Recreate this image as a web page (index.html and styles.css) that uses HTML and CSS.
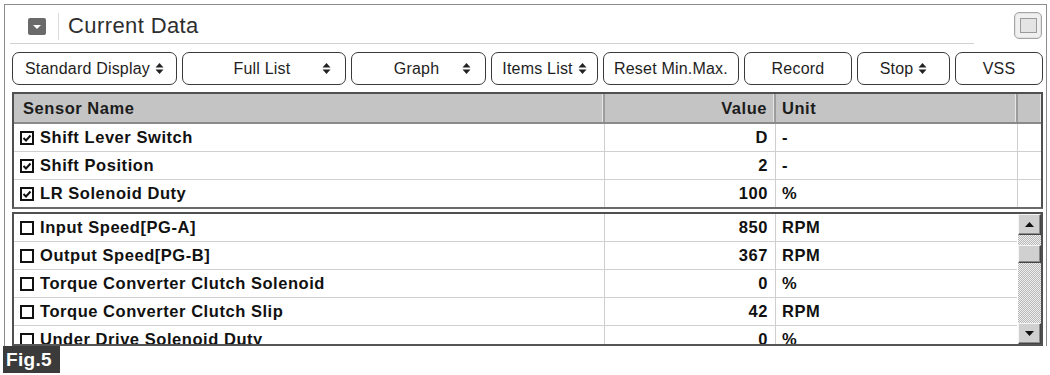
FILE: index.html
```html
<!DOCTYPE html>
<html>
<head>
<meta charset="utf-8">
<link rel="stylesheet" href="styles.css">
</head>
<body>
<div class="frame">
  <div class="titlebar">
    <div class="title-area">
      <span class="collapse-icon">
        <svg width="18" height="17" viewBox="0 0 18 17"><rect x="0" y="0" width="18" height="17" rx="2" fill="#6a6a6a"/><polygon points="5,7 13,7 9,11" fill="#fff"/></svg>
      </span>
      <span class="title-sep"></span>
      <span class="title-text">Current Data</span>
    </div>
    <div class="max-btn"><span class="max-inner"></span></div>
  </div>

  <div class="toolbar">
    <div class="tbtn sel w165"><span class="lbl">Standard Display</span><svg class="arr" width="9" height="13" viewBox="0 0 9 13"><polygon points="0.5,5.5 8.5,5.5 4.5,1" fill="#222"/><polygon points="0.5,7.5 8.5,7.5 4.5,12" fill="#222"/></svg></div>
    <div class="tbtn sel spread w164"><span class="lbl">Full List</span><svg class="arr" width="9" height="13" viewBox="0 0 9 13"><polygon points="0.5,5.5 8.5,5.5 4.5,1" fill="#222"/><polygon points="0.5,7.5 8.5,7.5 4.5,12" fill="#222"/></svg></div>
    <div class="tbtn sel spread w135"><span class="lbl">Graph</span><svg class="arr" width="9" height="13" viewBox="0 0 9 13"><polygon points="0.5,5.5 8.5,5.5 4.5,1" fill="#222"/><polygon points="0.5,7.5 8.5,7.5 4.5,12" fill="#222"/></svg></div>
    <div class="tbtn sel w107"><span class="lbl">Items List</span><svg class="arr" width="9" height="13" viewBox="0 0 9 13"><polygon points="0.5,5.5 8.5,5.5 4.5,1" fill="#222"/><polygon points="0.5,7.5 8.5,7.5 4.5,12" fill="#222"/></svg></div>
    <div class="tbtn w136"><span class="lbl">Reset Min.Max.</span></div>
    <div class="tbtn w108"><span class="lbl">Record</span></div>
    <div class="tbtn sel w93"><span class="lbl">Stop</span><svg class="arr" width="9" height="13" viewBox="0 0 9 13"><polygon points="0.5,5.5 8.5,5.5 4.5,1" fill="#222"/><polygon points="0.5,7.5 8.5,7.5 4.5,12" fill="#222"/></svg></div>
    <div class="tbtn w88"><span class="lbl">VSS</span></div>
  </div>

  <div class="grid-wrap">
    <div class="top-box">
      <div class="row head">
        <div class="c c-name">Sensor Name</div>
        <div class="c c-val">Value</div>
        <div class="c c-unit">Unit</div>
        <div class="c c-x"></div>
      </div>
      <div class="row">
        <div class="c c-name"><svg class="cb" width="14" height="14" viewBox="0 0 14 14"><rect x="1" y="1" width="12" height="12" fill="#fff" stroke="#111" stroke-width="2"/><polyline points="3.5,7 6,9.5 10.5,4.5" fill="none" stroke="#111" stroke-width="2"/></svg>Shift Lever Switch</div>
        <div class="c c-val">D</div>
        <div class="c c-unit">-</div>
        <div class="c c-x"></div>
      </div>
      <div class="row">
        <div class="c c-name"><svg class="cb" width="14" height="14" viewBox="0 0 14 14"><rect x="1" y="1" width="12" height="12" fill="#fff" stroke="#111" stroke-width="2"/><polyline points="3.5,7 6,9.5 10.5,4.5" fill="none" stroke="#111" stroke-width="2"/></svg>Shift Position</div>
        <div class="c c-val">2</div>
        <div class="c c-unit">-</div>
        <div class="c c-x"></div>
      </div>
      <div class="row">
        <div class="c c-name"><svg class="cb" width="14" height="14" viewBox="0 0 14 14"><rect x="1" y="1" width="12" height="12" fill="#fff" stroke="#111" stroke-width="2"/><polyline points="3.5,7 6,9.5 10.5,4.5" fill="none" stroke="#111" stroke-width="2"/></svg>LR Solenoid Duty</div>
        <div class="c c-val">100</div>
        <div class="c c-unit">%</div>
        <div class="c c-x"></div>
      </div>
    </div>

    <div class="bottom-box">
      <div class="rows">
        <div class="row">
          <div class="c c-name"><svg class="cb" width="14" height="14" viewBox="0 0 14 14"><rect x="1" y="1" width="12" height="12" fill="#fff" stroke="#111" stroke-width="2"/></svg>Input Speed[PG-A]</div>
          <div class="c c-val">850</div>
          <div class="c c-unit">RPM</div>
        </div>
        <div class="row">
          <div class="c c-name"><svg class="cb" width="14" height="14" viewBox="0 0 14 14"><rect x="1" y="1" width="12" height="12" fill="#fff" stroke="#111" stroke-width="2"/></svg>Output Speed[PG-B]</div>
          <div class="c c-val">367</div>
          <div class="c c-unit">RPM</div>
        </div>
        <div class="row">
          <div class="c c-name"><svg class="cb" width="14" height="14" viewBox="0 0 14 14"><rect x="1" y="1" width="12" height="12" fill="#fff" stroke="#111" stroke-width="2"/></svg>Torque Converter Clutch Solenoid</div>
          <div class="c c-val">0</div>
          <div class="c c-unit">%</div>
        </div>
        <div class="row">
          <div class="c c-name"><svg class="cb" width="14" height="14" viewBox="0 0 14 14"><rect x="1" y="1" width="12" height="12" fill="#fff" stroke="#111" stroke-width="2"/></svg>Torque Converter Clutch Slip</div>
          <div class="c c-val">42</div>
          <div class="c c-unit">RPM</div>
        </div>
        <div class="row">
          <div class="c c-name"><svg class="cb" width="14" height="14" viewBox="0 0 14 14"><rect x="1" y="1" width="12" height="12" fill="#fff" stroke="#111" stroke-width="2"/></svg>Under Drive Solenoid Duty</div>
          <div class="c c-val">0</div>
          <div class="c c-unit">%</div>
        </div>
      </div>
      <div class="scrollbar">
        <div class="sb-btn"><svg width="9" height="5" viewBox="0 0 9 5"><polygon points="0,5 9,5 4.5,0" fill="#111"/></svg></div>
        <div class="sb-track">
          <div class="sb-thumb"></div>
        </div>
        <div class="sb-btn"><svg width="9" height="5" viewBox="0 0 9 5"><polygon points="0,0 9,0 4.5,5" fill="#111"/></svg></div>
      </div>
    </div>
  </div>
</div>
<div class="fig">Fig.5</div>
</body>
</html>
```

FILE: styles.css
```css
* { box-sizing: border-box; }
html, body { margin: 0; padding: 0; background: #fff; }
body {
  font-family: "Liberation Sans", Arial, sans-serif;
  color: #111;
  width: 1050px;
  height: 375px;
  overflow: hidden;
}

.frame {
  margin: 4px 0 0 4px;
  width: 1043px;
  height: 342px;
  border: 1px solid #8c8c8c;
  border-bottom: none;
  overflow: hidden;
}

/* title bar */
.titlebar {
  display: flex;
  align-items: flex-start;
  height: 39px;
}
.title-area {
  display: flex;
  align-items: center;
  width: 964px;
  margin-left: 5px;
  height: 39px;
  border-bottom: 1px solid #d2d2d2;
  padding-left: 18px;
  padding-top: 4px;
}
.collapse-icon { display: flex; width: 18px; height: 17px; margin-top: 1px; }
.title-sep {
  width: 1px;
  height: 27px;
  background: #dcdcdc;
  margin-left: 12px;
  margin-right: 9px;
}
.title-text {
  font-size: 22px;
  color: #2e2e2e;
  letter-spacing: 0.4px;
}
.max-btn {
  margin-left: 40px;
  margin-top: 7px;
  width: 28px;
  height: 27px;
  border: 1px solid #a5a5a5;
  border-radius: 5px;
  background: #f0f0f0;
  box-shadow: inset 0 0 0 1px #e2e2e2;
  display: flex;
  align-items: center;
  justify-content: center;
}
.max-inner {
  width: 17px;
  height: 15px;
  border: 1px solid #9a9a9a;
  background: #e4e4e4;
}

/* toolbar */
.toolbar {
  display: flex;
  gap: 5px;
  margin-top: 8px;
  padding-left: 7px;
  height: 33px;
}
.tbtn {
  height: 33px;
  border: 1.5px solid #3a3a3a;
  border-radius: 7px;
  background: #fff;
  display: flex;
  align-items: center;
  justify-content: center;
  font-size: 16px;
  color: #1e1e1e;
  letter-spacing: 0.2px;
  padding: 0 6px;
  white-space: nowrap;
}
.tbtn .arr { margin-left: 5px; flex: none; }
.tbtn.spread { padding-left: 24px; padding-right: 14px; }
.tbtn.spread .lbl { flex: 1; text-align: center; }
.w165 { width: 165px; }
.w164 { width: 164px; }
.w135 { width: 135px; }
.w107 { width: 107px; }
.w136 { width: 136px; }
.w108 { width: 108px; }
.w93 { width: 93px; }
.w88 { width: 88px; }

/* grid */
.grid-wrap {
  margin: 7px 0 0 7px;
  width: 1031px;
}
.top-box {
  border: 2px solid #505050;
  border-top-width: 2px;
  border-bottom: 2px solid #6a6a6a;
}
.row {
  display: grid;
  grid-template-columns: 591px 171px 242px 1fr;
  height: 28px;
  border-bottom: 1px solid #d0d0d0;
  font-weight: bold;
  font-size: 16.5px;
  letter-spacing: 0.55px;
}
.top-box .row:last-child { border-bottom: none; height: 27px; }
.row.head {
  height: 30px;
  background: #c4c4c4;
  border-bottom: 2px solid #8a8a8a;
  color: #1c1c1c;
}
.c {
  display: flex;
  align-items: center;
  border-right: 1px solid #cfcfcf;
  overflow: hidden;
  white-space: nowrap;
}
.head .c { border-right: 2px solid #9c9c9c; box-shadow: inset -1px 0 0 #e6e6e6; }
.head .c-x { border-right: none; }
.c-x { border-right: none; }
.c-name { padding-left: 6px; }
.head .c-name { padding-left: 9px; }
.c-val { justify-content: flex-end; padding-right: 7px; }
.c-unit { padding-left: 6px; }
.cb { margin-right: 6px; flex: none; }

.bottom-box {
  margin-top: 3px;
  height: 134px;
  border: 2px solid #505050;
  border-bottom: 2px solid #555;
  display: flex;
  overflow: hidden;
}
.rows { width: 1006px; overflow: hidden; }
.rows .row { grid-template-columns: 591px 171px 244px; }
.rows .c-unit { border-right: 1px solid #cfcfcf; }

.scrollbar {
  width: 23px;
  margin-left: 1px;
  display: flex;
  flex-direction: column;
  background: repeating-conic-gradient(#b8b8b8 0 25%, #efefef 0 50%) 0 0 / 2px 2px;
}
.sb-btn {
  height: 21px;
  background: #d0d0d0;
  border: 1px solid;
  border-color: #f4f4f4 #444 #444 #f4f4f4;
  box-shadow: inset -1px -1px 0 #8a8a8a;
  display: flex;
  align-items: center;
  justify-content: center;
}
.sb-track { flex: 1; padding-top: 10px; }
.sb-thumb {
  height: 18px;
  background: #d0d0d0;
  border: 1px solid;
  border-color: #f4f4f4 #444 #444 #f4f4f4;
  box-shadow: inset -1px -1px 0 #8a8a8a;
}

.fig {
  margin-left: 3px;
  width: 57px;
  height: 27px;
  background: #3b3b3b;
  color: #fff;
  font-weight: bold;
  font-size: 19px;
  display: flex;
  align-items: center;
  padding-left: 3px;
  letter-spacing: 0.3px;
}
```
